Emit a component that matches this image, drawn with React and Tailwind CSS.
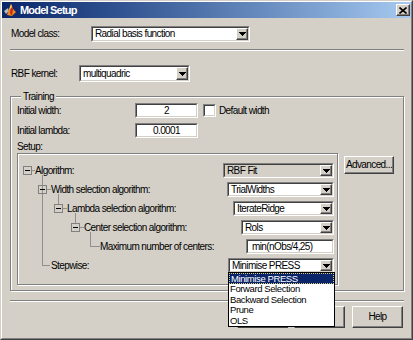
import React from "react";

const sunken = "border border-t-[#808080] border-l-[#808080] border-r-white border-b-white";
const sunkenInner = "border border-t-[#404040] border-l-[#404040] border-r-[#d4d0c8] border-b-[#d4d0c8]";
const raised =
  "border border-t-white border-l-white border-r-[#404040] border-b-[#404040] shadow-[inset_-1px_-1px_0_#808080]";
const etched = "border border-[#808080] shadow-[inset_1px_1px_0_#fff,1px_1px_0_#fff]";

const DownArrow = () => (
  <div className={`flex w-[12px] shrink-0 self-stretch items-center justify-center bg-[#d4d0c8] ${raised}`}>
    <svg width="7" height="4" viewBox="0 0 7 4" shapeRendering="crispEdges">
      <rect x="0" y="0" width="7" height="1" fill="#000" />
      <rect x="1" y="1" width="5" height="1" fill="#000" />
      <rect x="2" y="2" width="3" height="1" fill="#000" />
      <rect x="3" y="3" width="1" height="1" fill="#000" />
    </svg>
  </div>
);

const Combo = ({ className, value, bg = "bg-white", children }) => (
  <div className={`relative flex shrink-0 ${sunken} ${className}`}>
    <div className={`flex flex-1 items-center ${sunkenInner} ${bg}`}>
      <span className="flex-1 overflow-hidden whitespace-nowrap pl-[2px] leading-none">{value}</span>
      <DownArrow />
    </div>
    {children}
  </div>
);

const Edit = ({ className, value, align = "justify-center" }) => (
  <div className={`flex shrink-0 ${sunken} ${className}`}>
    <div className={`flex flex-1 items-center bg-white ${sunkenInner} ${align}`}>
      <span className="whitespace-nowrap leading-none">{value}</span>
    </div>
  </div>
);

const Button = ({ className, children }) => (
  <div className={`flex shrink-0 items-center justify-center bg-[#d4d0c8] ${raised} ${className}`}>
    <span className="whitespace-nowrap leading-none">{children}</span>
  </div>
);

const MatlabIcon = () => (
  <svg width="14" height="14" viewBox="0 0 14 14">
    <polygon points="1,8 5,5 6,8 3,11" fill="#b8b8b8" />
    <polygon points="4,12 8,1 10,6 13,9 9,13" fill="#f08a1c" />
    <polygon points="8,1 10,6 9,13 7,10" fill="#c8281a" />
    <polygon points="8,1 9,4 6,7" fill="#ffe060" />
  </svg>
);

// tree connectors, coordinates relative to the tree panel's padding box
const Expander = ({ cx, cy }) => (
  <g>
    <rect x={cx - 3.5} y={cy - 3.5} width="8" height="8" fill="none" stroke="#808080" />
    <line x1={cx - 2} y1={cy + 0.5} x2={cx + 3} y2={cy + 0.5} stroke="#000" />
  </g>
);

const TreeLines = () => (
  <svg className="pointer-events-none absolute left-0 top-0" width="319" height="130" shapeRendering="crispEdges">
    <g stroke="#909090">
      <line x1="14" y1="16.5" x2="17" y2="16.5" />
      <line x1="24.5" y1="21" x2="24.5" y2="112" />
      <line x1="24" y1="111.5" x2="32" y2="111.5" />
      <line x1="29" y1="35.5" x2="33" y2="35.5" />
      <line x1="40.5" y1="40" x2="40.5" y2="50" />
      <line x1="45" y1="54.5" x2="49" y2="54.5" />
      <line x1="57.5" y1="59" x2="57.5" y2="69" />
      <line x1="62" y1="73.5" x2="66" y2="73.5" />
      <line x1="72.5" y1="78" x2="72.5" y2="93" />
      <line x1="72" y1="92.5" x2="82" y2="92.5" />
    </g>
    <Expander cx={9} cy={16} />
    <Expander cx={24} cy={35} />
    <Expander cx={40} cy={54} />
    <Expander cx={57} cy={73} />
  </svg>
);

const TreeRow = ({ indent, label, children }) => (
  <div className="flex h-[19px] items-center">
    <span className={`whitespace-nowrap leading-none ${indent}`}>{label}</span>
    <div className="ml-auto">{children}</div>
  </div>
);

const stepwiseOptions = ["Minimise PRESS", "Forward Selection", "Backward Selection", "Prune", "OLS"];

export default function App() {
  return (
    <div className="relative h-[340px] w-[413px] overflow-hidden border border-t-[#d4d0c8] border-l-[#d4d0c8] border-r-[#404040] border-b-[#404040] bg-[#d4d0c8] font-['Liberation_Sans',Arial,sans-serif] text-[10px] tracking-[-0.6px] text-black">
      <div className="flex h-full flex-col border border-t-white border-l-white border-r-[#808080] border-b-[#808080]">
        {/* Title bar */}
        <div className="flex h-[16px] shrink-0 items-center bg-linear-to-r from-[#0a246a] to-[#a6caf0] pl-[1px] pr-[1px]">
          <MatlabIcon />
          <span className="ml-[3px] text-[11px] font-bold leading-none tracking-[-0.8px] text-white">Model Setup</span>
          <div className={`ml-auto flex h-[12px] w-[14px] items-center justify-center bg-[#d4d0c8] ${raised}`}>
            <svg width="8" height="7" viewBox="0 0 8 7">
              <path d="M0.5 0.5L7.5 6.5M7.5 0.5L0.5 6.5" stroke="#000" strokeWidth="1.6" />
            </svg>
          </div>
        </div>

        <div className="flex flex-1 flex-col pl-[8px] pr-[7px]">
          {/* Model class */}
          <div className="mt-[8px] flex h-[16px] items-center pl-[1px]">
            <span className="w-[80px] leading-none">Model class:</span>
            <Combo className="h-[16px] w-[159px]" value="Radial basis function" />
          </div>

          <div className="mt-[7px] h-[2px] border-t border-b border-t-[#808080] border-b-white" />

          {/* RBF kernel */}
          <div className="mt-[14px] flex h-[17px] items-center pl-[1px]">
            <span className="w-[68px] leading-none">RBF kernel:</span>
            <Combo className="h-[17px] w-[111px]" value="multiquadric" />
          </div>

          {/* Training group */}
          <div className={`relative mt-[14px] pb-[5px] pl-[6px] pt-[6px] ${etched}`}>
            <span className="absolute left-[10px] top-[-7px] bg-[#d4d0c8] px-[2px] leading-[13px]">Training</span>

            <div className="flex h-[15px] items-center">
              <span className="w-[118px] leading-none">Initial width:</span>
              <Edit className="h-[15px] w-[63px]" value="2" />
              <div className={`ml-[5px] h-[13px] w-[13px] bg-white ${sunken}`}>
                <div className={`h-full w-full ${sunkenInner}`} />
              </div>
              <span className="ml-[3px] leading-none">Default width</span>
            </div>

            <div className="mt-[5px] flex h-[15px] items-center">
              <span className="w-[118px] leading-none">Initial lambda:</span>
              <Edit className="h-[15px] w-[63px]" value="0.0001" />
            </div>

            <div className="mt-[2px] flex h-[13px] items-center">
              <span className="leading-none">Setup:</span>
            </div>

            <div className="flex items-start">
              <div className={`relative h-[132px] w-[321px] shrink-0 pr-[3px] pt-[7px] ${etched}`}>
                <TreeLines />
                <TreeRow indent="pl-[17px]" label="Algorithm:">
                  <Combo className="h-[15px] w-[111px]" value="RBF Fit" bg="bg-[#d4d0c8]" />
                </TreeRow>
                <TreeRow indent="pl-[33px]" label="Width selection algorithm:">
                  <Combo className="h-[15px] w-[107px]" value="TrialWidths" />
                </TreeRow>
                <TreeRow indent="pl-[49px]" label="Lambda selection algorithm:">
                  <Combo className="h-[15px] w-[101px]" value="IterateRidge" />
                </TreeRow>
                <TreeRow indent="pl-[66px]" label="Center selection algorithm:">
                  <Combo className="h-[15px] w-[93px]" value="Rols" />
                </TreeRow>
                <TreeRow indent="pl-[82px]" label="Maximum number of centers:">
                  <Edit className="h-[15px] w-[88px]" value="min(nObs/4,25)" align="justify-start pl-[4px]" />
                </TreeRow>
                <TreeRow indent="pl-[33px]" label="Stepwise:">
                  <Combo className="h-[15px] w-[106px]" value="Minimise PRESS">
                    {/* open drop-down list */}
                    <div className="absolute left-[-1px] top-full z-10 w-[107px] border border-black bg-white text-[9.5px] tracking-[-0.4px]">
                      {stepwiseOptions.map((opt, i) => (
                        <div
                          key={opt}
                          className={`flex h-[10.5px] items-center whitespace-nowrap pl-[1px] leading-none ${
                            i === 0 ? "border border-dotted border-[#d8c878] bg-[#0a246a] text-white" : ""
                          }`}
                        >
                          {opt}
                        </div>
                      ))}
                    </div>
                  </Combo>
                </TreeRow>
              </div>
              <Button className="ml-[6px] mt-[3px] h-[18px] w-[50px]">Advanced...</Button>
            </div>
          </div>

          <div className="mt-[9px] h-[2px] border-t border-b border-t-[#808080] border-b-white" />

          {/* Dialog buttons */}
          <div className="mr-[1px] mt-[4px] flex justify-end gap-[6px]">
            <Button className="h-[22px] w-[51px]">OK</Button>
            <Button className="h-[22px] w-[51px]">Cancel</Button>
            <Button className="ml-[1px] h-[22px] w-[51px]">Help</Button>
          </div>
        </div>
      </div>
    </div>
  );
}
